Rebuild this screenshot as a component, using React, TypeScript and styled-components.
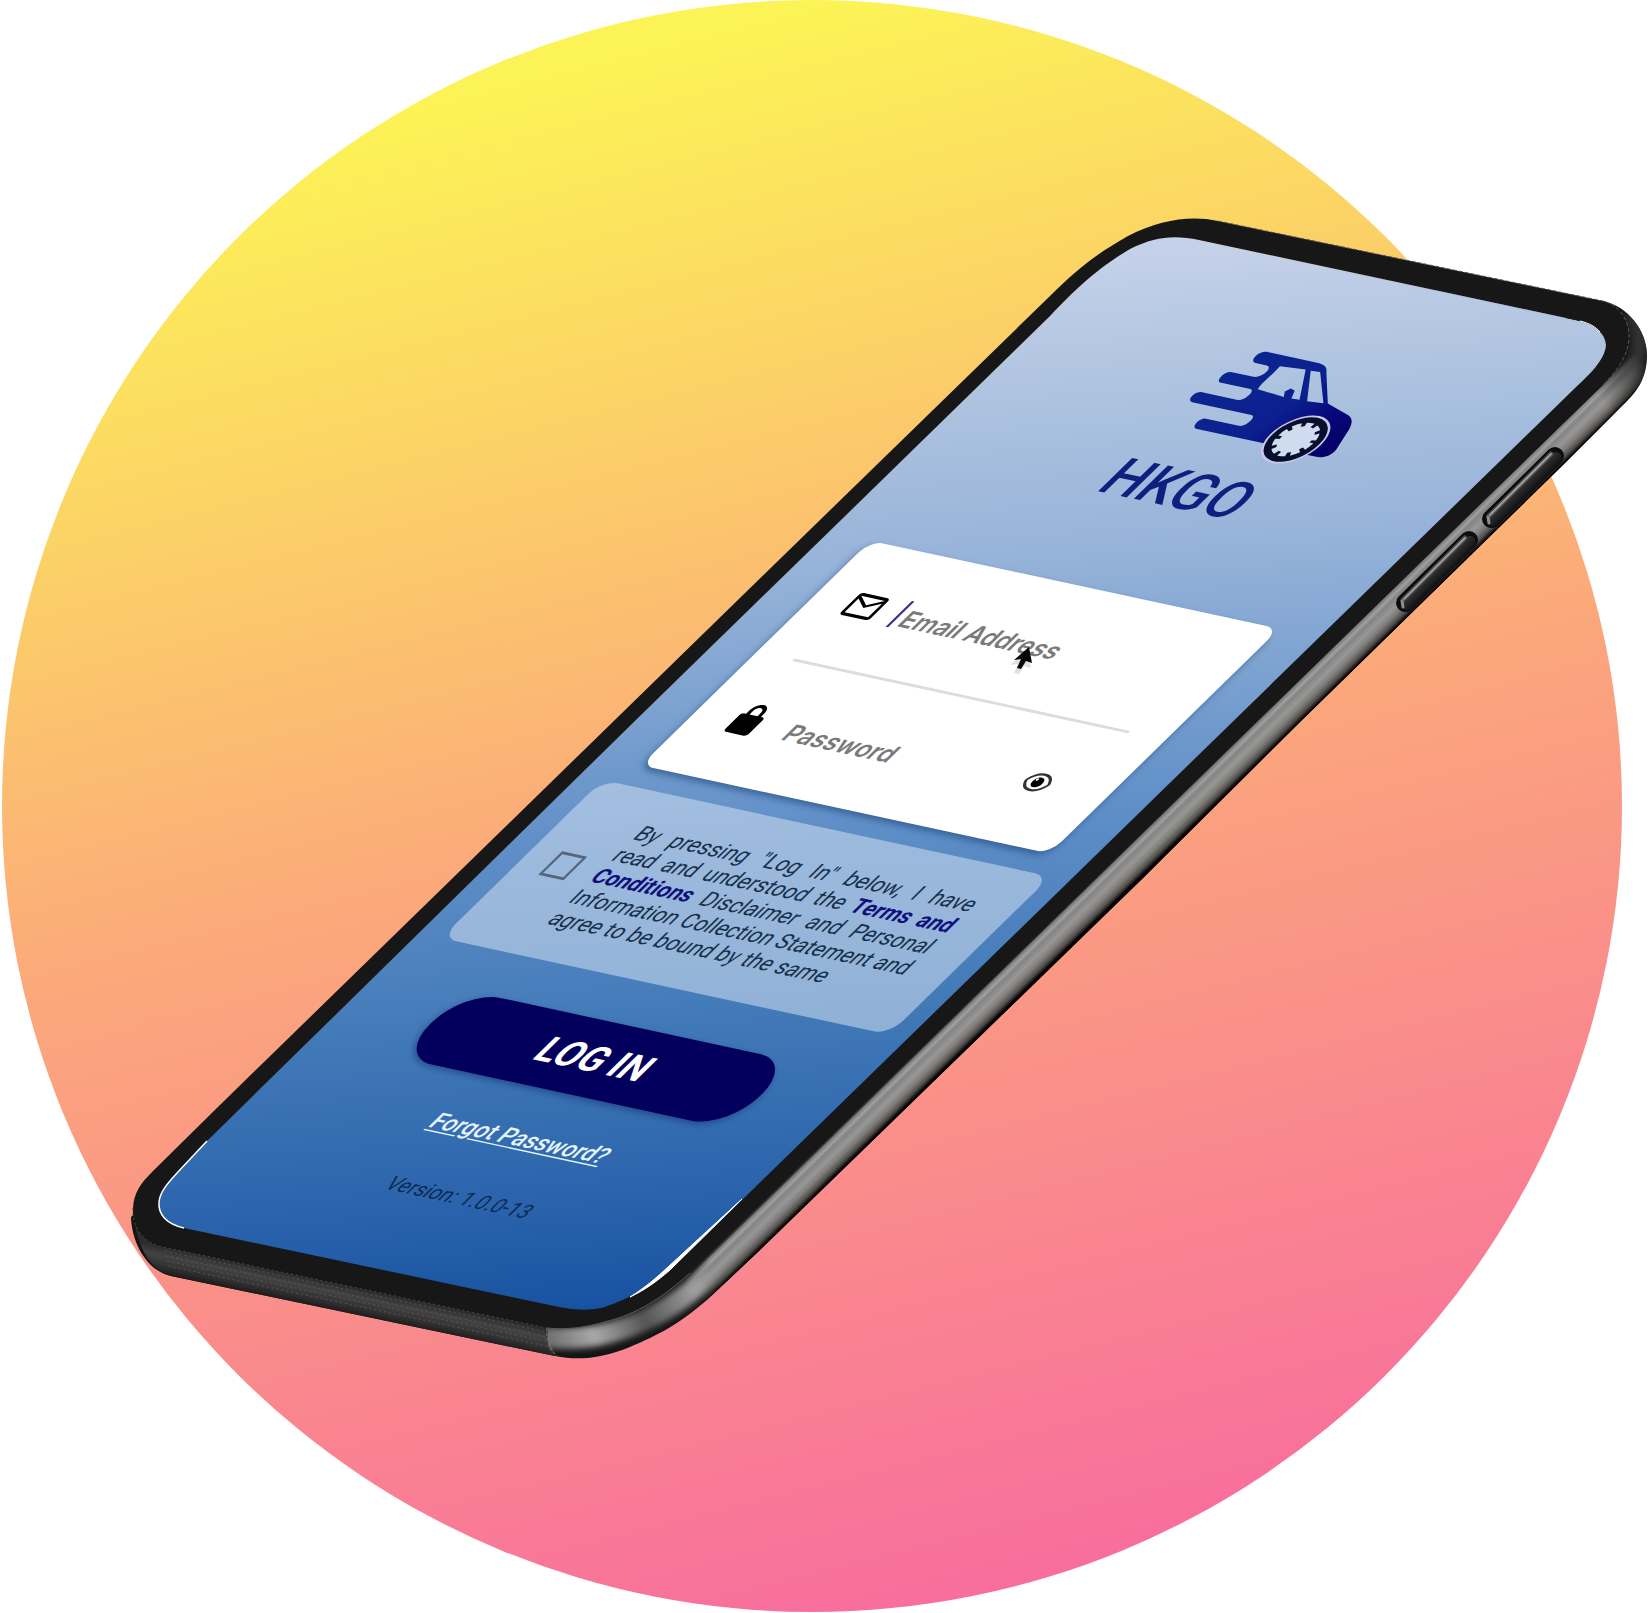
import { useLayoutEffect, useRef, useState } from "react";
import styled, { createGlobalStyle } from "styled-components";
import { MdMailOutline } from "react-icons/md";

const SCENE_WIDTH = 1648;

const GlobalStyle = createGlobalStyle`
  *, *::before, *::after { box-sizing: border-box; }
  body { margin: 0; background: #ffffff; }
`;

const Stage = styled.main`
  position: relative;
  width: 100%;
  aspect-ratio: 1648 / 1613;
  overflow: hidden;
  font-family: Roboto, "Liberation Sans", sans-serif;
`;

const Artwork = styled.svg`
  display: block;
  width: 100%;
  height: 100%;
`;

/* The bezel and the mouse pointer lie over the display. */
const Overlay = styled.svg`
  position: absolute;
  top: 0;
  left: 0;
  width: 100%;
  height: 100%;
  pointer-events: none;
`;

/* The display lies on the tilted face of the phone; its edge runs under the bezel. */
const Screen = styled.section`
  position: absolute;
  top: 0;
  left: 0;
  width: 396px;
  height: 848px;
  padding-right: 6px;
  display: flex;
  flex-direction: column;
  overflow: hidden;
  transform-origin: 0 0;
  border-radius: 32px 32px 40px 32px / 48px 48px 56px 32px;
  background: linear-gradient(
    162deg,
    #c8d3ea 0%,
    #acc2df 16%,
    #9ab5da 28%,
    #7fa4d1 41%,
    #608fc8 54%,
    #427ab8 71%,
    #2a63ab 88%,
    #144f9f 100%
  );
`;

const Brand = styled.header`
  display: flex;
  flex-direction: column;
  align-items: center;
  height: 260px;
  padding: 66px 0 0 8px;
`;

const CarLogo = styled.svg`
  width: 132px;
  height: 80px;
  margin-left: 22px;
`;

const BrandName = styled.h1`
  margin: 8px 0 0;
  font-size: 40px;
  line-height: 48px;
  font-weight: 500;
  color: #0f1f80;
`;

const LoginForm = styled.form`
  display: flex;
  flex-direction: column;
  gap: 16px;
`;

const FieldCard = styled.div`
  margin: 0 33px;
  padding: 0 29px;
  border-radius: 10px;
  background: #ffffff;
  box-shadow: 0 3px 4px rgba(20, 60, 110, 0.5);
`;

const Field = styled.div<{ $divided?: boolean }>`
  display: flex;
  align-items: center;
  height: 96px;
  border-bottom: ${(p) => (p.$divided ? "2px solid #dcdcdc" : "0")};
`;

const FieldLabel = styled.label`
  display: flex;
  width: 41px;
  margin-left: -3px;
  font-size: 28px;
  color: #000000;
`;

const Caret = styled.span`
  width: 2px;
  height: 22px;
  margin-right: -2px;
  background: #3a2a94;
`;

const TextInput = styled.input`
  flex: 1;
  min-width: 0;
  height: 32px;
  padding: 4px 0 0 6px;
  border: 0;
  outline: 0;
  background: transparent;
  color: #222222;
  font: 600 18px / 24px Inter, "Liberation Sans", sans-serif;
  &::placeholder {
    color: #7a7a7a;
    opacity: 1;
  }
`;

const RevealButton = styled.button`
  display: flex;
  margin-right: 16px;
  padding: 0;
  border: 0;
  background: none;
  color: #000000;
`;

const TermsPanel = styled.div`
  display: flex;
  align-items: center;
  height: 135px;
  margin: 0 17px 0 18px;
  padding: 0 30px 0 21px;
  border-radius: 12px;
  background: rgba(203, 218, 238, 0.58);
`;

const TermsCheck = styled.input`
  appearance: none;
  flex: none;
  width: 20px;
  height: 20px;
  margin: 0 17px 4px 0;
  border: 2px solid #56657c;
  &:checked {
    background: #02025e;
  }
`;

const TermsText = styled.label`
  flex: 1;
  font-size: 16px;
  line-height: 18px;
  text-align: justify;
  color: #17304c;
`;

const TermsLink = styled.a`
  color: #10107c;
  font-weight: 700;
  text-decoration: none;
`;

const Actions = styled.div`
  display: flex;
  flex-direction: column;
  align-items: center;
  padding: 17px 0 0 7px;
`;

const LoginButton = styled.button`
  width: 262px;
  height: 57px;
  padding: 0;
  border: 0;
  border-radius: 28px;
  background: #02005c;
  box-shadow: 0 2px 4px rgba(8, 20, 80, 0.4);
  color: #ffffff;
  font: 700 27px / 32px Roboto, "Liberation Sans", sans-serif;
`;

const Footnotes = styled.div`
  display: flex;
  flex-direction: column;
  align-items: center;
  gap: 32px;
  padding: 28px 0 0 8px;
`;

const ForgotLink = styled.a`
  font-size: 17px;
  line-height: 20px;
  font-weight: 500;
  color: #e6f4fc;
  text-decoration: underline;
  text-underline-offset: 2px;
`;

const Version = styled.p`
  margin: 0;
  font-size: 15px;
  line-height: 18px;
  color: #0c2b54;
`;

const speakerRows = [4, 9, 14, 19];

const BODY =
  "M1603 301C1628 306 1648 332 1647 357C1646 380 1637 392 1620 408L1563 465 1300 722 1141 880 760 1250 707 1300C672 1330 650 1338 630 1347 602 1358 580 1361 555 1356L171 1276C148 1271 132 1245 131 1217L700 700Z";

const FACE =
  "M1218 221 1603 301C1622 306 1630 324 1629 338 1628 355 1618 370 1603 385L690 1273C661 1299 636 1314 608 1321 584 1328 565 1330 547 1328L163 1247C141 1242 132 1226 133 1208 134 1192 141 1183 153 1171L222 1103 820 520 1050 296C1078 268 1098 253 1128 236 1160 220 1190 215 1218 221Z";

const WINDOW =
  "M1199 240 1580 321C1597 326 1605 334 1606 345 1605 360 1590 374 1573 390L742 1200 670 1270C652 1286 630 1298 605 1307 590 1311 575 1310 559 1307L184 1228C166 1224 158 1214 159 1202 160 1192 167 1184 177 1173L207 1141 640 716 840 521 1050 316C1085 279 1105 264 1130 249 1156 236 1175 235 1199 240Z";

function VolumeKey({ x, y }: { x: number; y: number }) {
  return (
    <g transform={`translate(${x} ${y})`} strokeLinecap="round" fill="none">
      <path d="M1 0 65 -63" stroke="#0c0c0c" strokeWidth="18" />
      <path d="M3 1 66 -61" stroke="url(#key)" strokeWidth="12" />
      <path d="M-1 -3 61 -65" stroke="#4a4a4a" strokeWidth="5" />
      <path d="M0 -4 61 -65" stroke="#9c9c9c" strokeWidth="2" />
      <path d="M-2 -2 -1 4" stroke="#8d8d8d" strokeWidth="3" />
    </g>
  );
}

function PhoneArtwork() {
  return (
    <Artwork viewBox="0 0 1648 1613" aria-hidden="true">
      <defs>
        <linearGradient id="sunset" gradientUnits="userSpaceOnUse" x1="347" y1="126" x2="735" y2="1674">
          <stop offset="0" stopColor="#fcf356" />
          <stop offset="0.48" stopColor="#fba87b" />
          <stop offset="1" stopColor="#f86c9e" />
        </linearGradient>
        <linearGradient id="glow" gradientUnits="userSpaceOnUse" x1="0" y1="240" x2="0" y2="1300">
          <stop offset="0" stopColor="#b9c9e4" />
          <stop offset="0.45" stopColor="#7399d0" />
          <stop offset="1" stopColor="#1b57a5" />
        </linearGradient>
        <linearGradient id="rail" gradientUnits="userSpaceOnUse" x1="1300" y1="679" x2="1321" y2="700.500">
          <stop offset="0" stopColor="#303030" />
          <stop offset="0.05" stopColor="#7a7a7a" />
          <stop offset="0.17" stopColor="#a0a0a0" />
          <stop offset="0.27" stopColor="#848484" />
          <stop offset="0.48" stopColor="#979796" />
          <stop offset="0.68" stopColor="#7f7d7b" />
          <stop offset="0.86" stopColor="#504d4a" />
          <stop offset="0.97" stopColor="#151313" />
          <stop offset="1" stopColor="#000000" />
        </linearGradient>
        <linearGradient id="railFade" gradientUnits="userSpaceOnUse" x1="694" y1="1292" x2="1646" y2="363">
          <stop offset="0" stopColor="#000000" />
          <stop offset="0.026" stopColor="#ffffff" />
          <stop offset="0.957" stopColor="#ffffff" />
          <stop offset="1" stopColor="#000000" />
        </linearGradient>
        <mask id="railMask" maskUnits="userSpaceOnUse" x="0" y="0" width="1648" height="1613">
          <rect width="1648" height="1613" fill="url(#railFade)" />
        </mask>
        <linearGradient id="foot" gradientUnits="userSpaceOnUse" x1="350" y1="1287" x2="344" y2="1315">
          <stop offset="0" stopColor="#2c2c2c" />
          <stop offset="0.3" stopColor="#444343" />
          <stop offset="0.6" stopColor="#353434" />
          <stop offset="0.9" stopColor="#1f1c1c" />
          <stop offset="1" stopColor="#0a0a0a" />
        </linearGradient>
        <linearGradient id="bend" gradientUnits="userSpaceOnUse" x1="546" y1="1340" x2="720" y2="1265">
          <stop offset="0" stopColor="#6c6c6c" />
          <stop offset="0.24" stopColor="#a9a9a9" />
          <stop offset="0.52" stopColor="#545454" />
          <stop offset="0.84" stopColor="#a2a2a2" />
          <stop offset="1" stopColor="#8d8d8d" />
        </linearGradient>
        <linearGradient id="key" gradientUnits="userSpaceOnUse" x1="28" y1="-36" x2="38" y2="-26">
          <stop offset="0" stopColor="#3c3c3c" />
          <stop offset="1" stopColor="#161616" />
        </linearGradient>
        <filter id="soften" filterUnits="userSpaceOnUse" x="500" y="1160" width="300" height="240">
          <feGaussianBlur stdDeviation="3" />
        </filter>
        <filter id="softenTop" filterUnits="userSpaceOnUse" x="1560" y="260" width="88" height="200">
          <feGaussianBlur stdDeviation="4" />
        </filter>
        <clipPath id="bodyClip">
          <path d={BODY} />
        </clipPath>
        <clipPath id="bendClip">
          <path d="M547 1310 740 1160 840 1260 700 1400 557 1380 548 1345Z" />
        </clipPath>
      </defs>

      <ellipse cx="812" cy="806" rx="810" ry="806" fill="url(#sunset)" />

      <path d={BODY} fill="#141414" />
      <path d="M134 1216C140 1237 150 1244 163 1247L547 1328 555 1356 171 1276C150 1270 137 1246 134 1216Z" fill="url(#foot)" />
      <g stroke="#5d5252" strokeWidth="1" strokeDasharray="2 3">
        {speakerRows.map((d) => (
          <path key={d} d={`M${164 + d / 4} ${1247 + d}L${546 + d / 4} ${1328 + d}`} />
        ))}
      </g>
      <g clipPath="url(#bodyClip)">
        <g clipPath="url(#bendClip)">
          <path
            d="M530 1336C575 1342 606 1336 636 1324 668 1311 690 1294 708 1276L760 1226"
            fill="none"
            stroke="url(#bend)"
            strokeWidth="21"
            filter="url(#soften)"
          />
        </g>
        <path d="M1630 310C1648 340 1640 370 1612 398" fill="none" stroke="#303030" strokeWidth="16" filter="url(#softenTop)" />
        <g mask="url(#railMask)">
          <path d="M1603 384 1634 350 1650 372 1620 408 1563 467 1300 724 1141 881 760 1252 700 1312 672 1290Z" fill="url(#rail)" />
        </g>
      </g>
      <path d="M547 1328C546 1340 550 1350 557 1356" fill="none" stroke="#777777" strokeWidth="1" strokeDasharray="3 2" />
      <VolumeKey x={1490} y={519} />
      <VolumeKey x={1404} y={603} />
      <path d={WINDOW} fill="url(#glow)" />
    </Artwork>
  );
}

function Bezel() {
  return (
    <Overlay viewBox="0 0 1648 1613" aria-hidden="true">
      <path d={`${FACE}${WINDOW}`} fill="#171717" fillRule="evenodd" />
      <path
        d="M1218 221 1603 301C1622 306 1630 324 1629 338 1628 355 1618 370 1603 385"
        fill="none"
        stroke="#565656"
        strokeWidth="1"
        strokeDasharray="4 2"
      />
      <path d="M547 1328C565 1330 584 1328 608 1321 636 1314 661 1299 690 1273" fill="none" stroke="#5a5a5a" strokeWidth="1" />
      <path d="M133 1208C132 1226 141 1242 163 1247L547 1328" fill="none" stroke="#4a4a4a" strokeWidth="1" strokeDasharray="2 3" />
      <path
        d="M207 1141 177 1173C167 1184 160 1192 159 1202 158 1214 166 1224 184 1228"
        fill="none"
        stroke="#ffffff"
        strokeWidth="1.500"
      />
      <path d="M742 1199 670 1270C656 1282 645 1290 630 1297 646 1287 656 1278 668 1267Z" fill="#ffffff" stroke="#ffffff" strokeWidth="1" />
      <path d="M1580 321C1589 323 1596 327 1600 332" fill="none" stroke="#ffffff" strokeWidth="1" />
      <path d="M1029 647 1033 665 1026 663 1021 671 1016 670 1020 661 1012 662Z" fill="#000000" fillOpacity="0.12" transform="translate(-2 3)" />
      <path d="M1029 647 1032 663 1026 661 1021 669 1017 668 1021 659 1014 660Z" fill="#050505" />
    </Overlay>
  );
}

function Car() {
  return (
    <CarLogo viewBox="144 66 132 80" aria-hidden="true">
      <defs>
        <linearGradient id="paint" gradientUnits="userSpaceOnUse" x1="160" y1="90" x2="270" y2="120">
          <stop offset="0" stopColor="#0b2590" />
          <stop offset="0.5" stopColor="#0c1f8e" />
          <stop offset="0.8" stopColor="#07067a" />
          <stop offset="1" stopColor="#04026a" />
        </linearGradient>
      </defs>
      <path
        fill="url(#paint)"
        fillRule="evenodd"
        d="M165 68H204C210 68 214 69 217 73L239 95 260 100C266 102 269 106 271 113L275 126C276 131 272 134 267 134H258L222 132.500H170C166 132 165 125 169 124H196C201 124 202 115 197 114.500H150C145 114 144 107 149 106H178C183 106 184 97 179 96.500H155C151 96 150 88 155 87.500H173C179 87 180 78 174 77.500H165C159 77 159 68 165 68ZM183 76 202 74.500 218 96.500 212 97 209 91 205 90 203 93 206 97 184 95.500C182 90 184 84 183 76ZM206 74.500 213 74 236 95.500 224 96.500Z"
      />
      <circle cx="242" cy="125" r="20" fill="#c9c8ea" />
      <circle cx="242" cy="125" r="18.500" fill="#080f2c" />
      <circle cx="242" cy="125" r="11" fill="#cfdcf0" />
      <circle cx="242" cy="125" r="12" fill="none" stroke="#cfdcf0" strokeWidth="4" strokeDasharray="5 2.540" />
    </CarLogo>
  );
}

function LockIcon() {
  return (
    <svg width="28" height="28" viewBox="0 0 24 24" aria-hidden="true">
      <path
        fill="currentColor"
        d="M18 8.500h-1V6c0-2.760-2.240-5-5-5S7 3.240 7 6v2.500H6c-1.100 0-2 .9-2 2V20c0 1.100.9 2 2 2h12c1.100 0 2-.9 2-2v-9.500c0-1.100-.9-2-2-2zM9.300 6c0-1.500 1.200-2.700 2.700-2.700s2.700 1.200 2.700 2.700v2.500H9.300V6z"
      />
    </svg>
  );
}

export default function App() {
  const stage = useRef<HTMLElement>(null);
  const [scale, setScale] = useState(1);

  useLayoutEffect(() => {
    const node = stage.current;
    if (!node) return;
    const update = () => setScale(node.clientWidth / SCENE_WIDTH);
    update();
    const observer = new ResizeObserver(update);
    observer.observe(node);
    return () => observer.disconnect();
  }, []);

  return (
    <>
      <GlobalStyle />
      <Stage ref={stage}>
        <PhoneArtwork />
        <Screen style={{ transform: `scale(${scale}) matrix(1.2615, 0.272, -1.1967, 1.1704, 1140, 227.4)` }}>
          <Brand>
            <Car />
            <BrandName>HKGO</BrandName>
          </Brand>
          <LoginForm onSubmit={(e) => e.preventDefault()}>
            <FieldCard>
              <Field $divided>
                <FieldLabel htmlFor="email" aria-label="Email Address">
                  <MdMailOutline />
                </FieldLabel>
                <Caret />
                <TextInput id="email" type="email" placeholder="Email Address" />
              </Field>
              <Field>
                <FieldLabel htmlFor="password" aria-label="Password">
                  <LockIcon />
                </FieldLabel>
                <TextInput id="password" type="password" placeholder="Password" />
                <RevealButton type="button" aria-label="Show password">
                  <svg width="20" height="16" viewBox="0 0 20 16" fill="none">
                    <path
                      d="M1 8C3 3 7 1.500 10 1.500S17 3 19 8C17 13 13 14.500 10 14.500S3 13 1 8Z"
                      stroke="#333333"
                      strokeWidth="1.800"
                    />
                    <circle cx="10" cy="8" r="4" fill="#000000" />
                    <circle cx="8" cy="6" r="1" fill="#ffffff" />
                  </svg>
                </RevealButton>
              </Field>
            </FieldCard>
            <TermsPanel>
              <TermsCheck id="terms" type="checkbox" />
              <TermsText htmlFor="terms">
                By pressing "Log In" below, I have read and understood the{" "}
                <TermsLink href="#terms">Terms and Conditions</TermsLink> Disclaimer and Personal Information
                Collection Statement and agree to be bound by the same
              </TermsText>
            </TermsPanel>
            <Actions>
              <LoginButton type="submit">LOG IN</LoginButton>
              <Footnotes>
                <ForgotLink href="#forgot">Forgot Password?</ForgotLink>
                <Version>Version: 1.0.0-13</Version>
              </Footnotes>
            </Actions>
          </LoginForm>
        </Screen>
        <Bezel />
      </Stage>
    </>
  );
}
